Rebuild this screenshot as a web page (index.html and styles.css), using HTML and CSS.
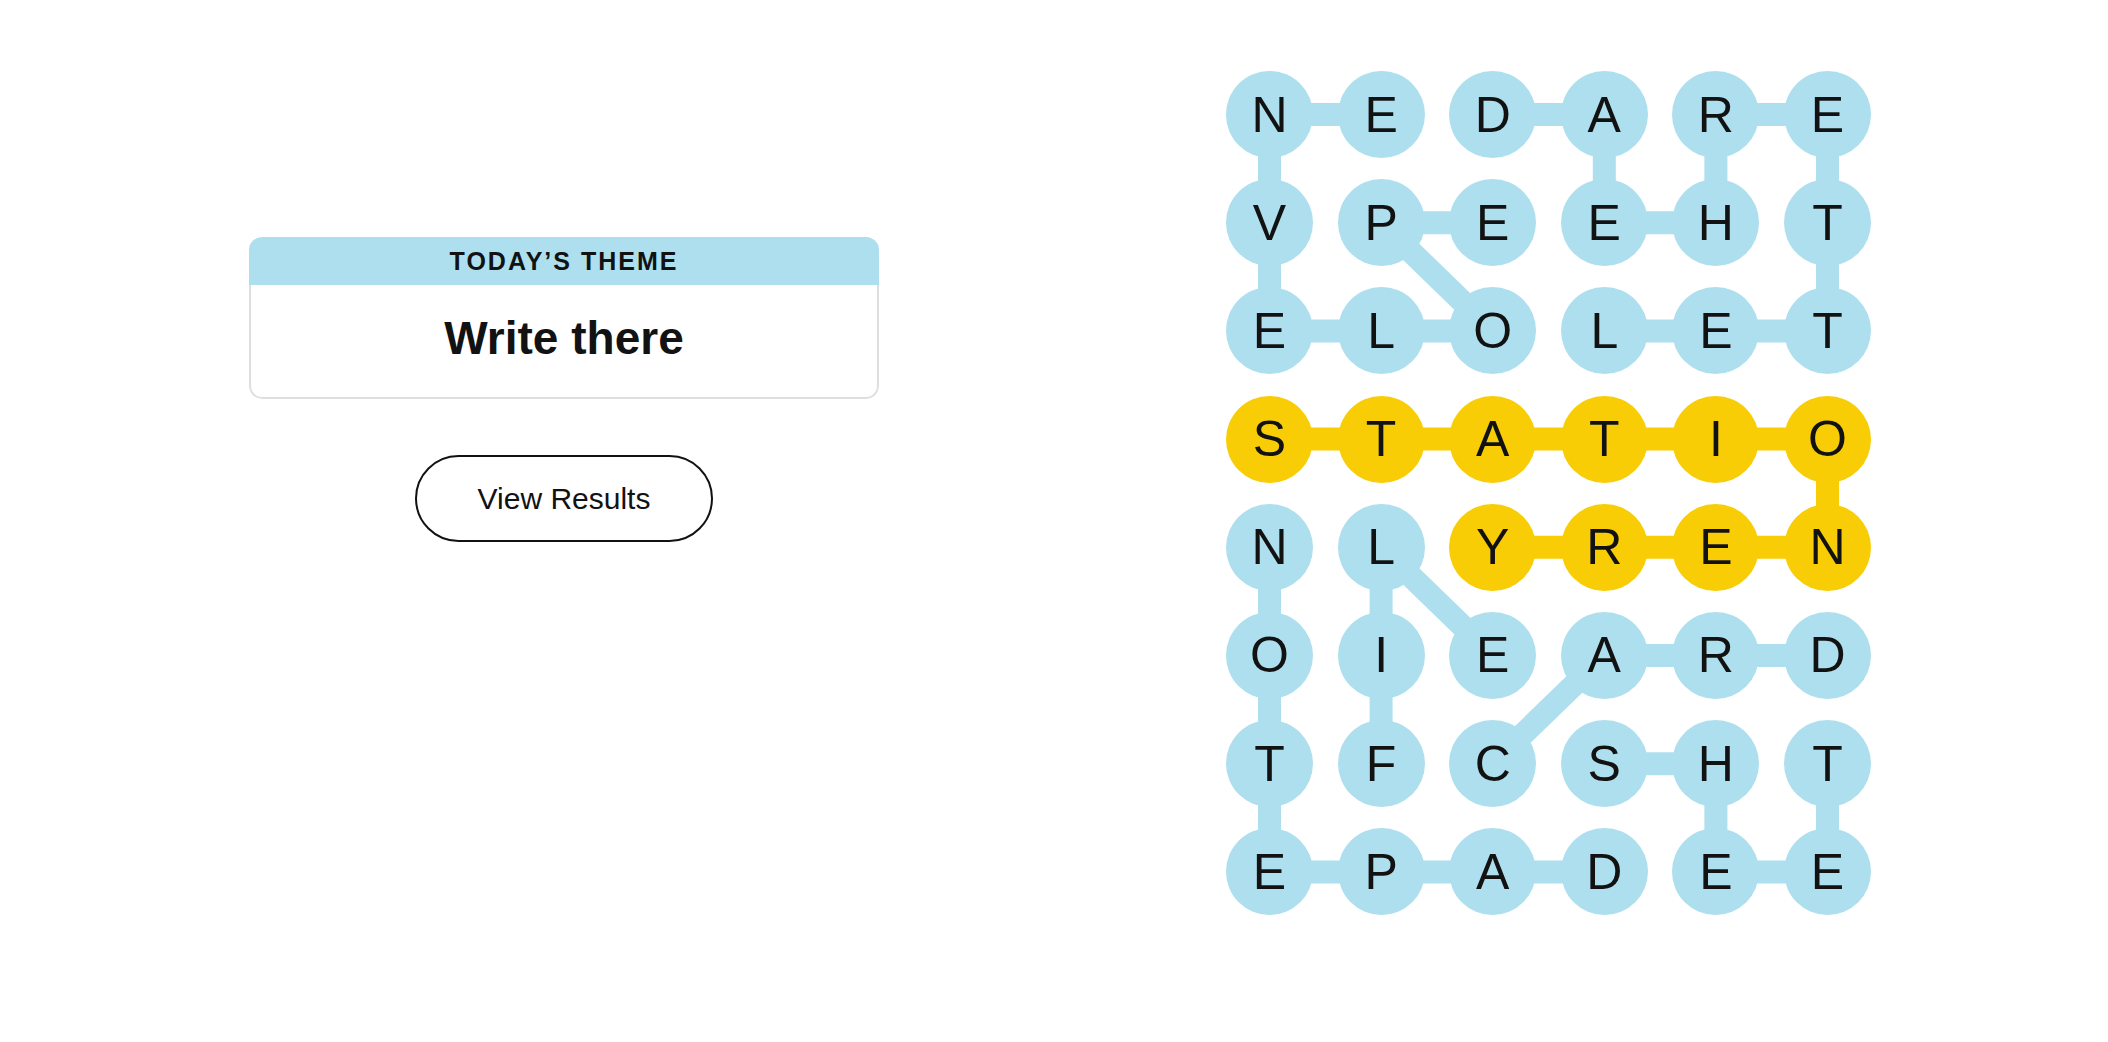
FILE: index.html
```html
<!DOCTYPE html>
<html lang="en">
<head>
    <meta charset="UTF-8">
    <meta name="viewport" content="width=device-width, initial-scale=1.0">
    <title>Strands</title>
    <link rel="stylesheet" href="styles.css">
</head>
<body>
    <main class="game">
        <section class="side">
            <div class="theme-card">
                <div class="theme-head">Today’s Theme</div>
                <div class="theme-body">
                    <h1>Write there</h1>
                </div>
            </div>
            <button class="results-btn">View Results</button>
        </section>

        <section class="board">
            <svg class="connectors" viewBox="0 0 645 844.4" width="645" height="844.4">
                <g class="found">
                    <!-- envelope -->
                    <polyline points="155.1,43.5 43.5,43.5 43.5,151.7 43.5,259.9 155.1,259.9 266.7,259.9 155.1,151.7 266.7,151.7" />
                    <!-- letterhead -->
                    <polyline points="378.3,259.9 489.9,259.9 601.5,259.9 601.5,151.7 601.5,43.5 489.9,43.5 489.9,151.7 378.3,151.7 378.3,43.5 266.7,43.5" />
                    <!-- notepad -->
                    <polyline points="43.5,476.3 43.5,584.5 43.5,692.7 43.5,800.9 155.1,800.9 266.7,800.9 378.3,800.9" />
                    <!-- file -->
                    <polyline points="155.1,692.7 155.1,584.5 155.1,476.3 266.7,584.5" />
                    <!-- card -->
                    <polyline points="266.7,692.7 378.3,584.5 489.9,584.5 601.5,584.5" />
                    <!-- sheet -->
                    <polyline points="378.3,692.7 489.9,692.7 489.9,800.9 601.5,800.9 601.5,692.7" />
                </g>
                <g class="spangram">
                    <polyline points="43.5,368.1 601.5,368.1 601.5,476.3 266.7,476.3" />
                </g>
            </svg>

            <div class="grid">
                <button class="cell found">N</button>
                <button class="cell found">E</button>
                <button class="cell found">D</button>
                <button class="cell found">A</button>
                <button class="cell found">R</button>
                <button class="cell found">E</button>

                <button class="cell found">V</button>
                <button class="cell found">P</button>
                <button class="cell found">E</button>
                <button class="cell found">E</button>
                <button class="cell found">H</button>
                <button class="cell found">T</button>

                <button class="cell found">E</button>
                <button class="cell found">L</button>
                <button class="cell found">O</button>
                <button class="cell found">L</button>
                <button class="cell found">E</button>
                <button class="cell found">T</button>

                <button class="cell spangram">S</button>
                <button class="cell spangram">T</button>
                <button class="cell spangram">A</button>
                <button class="cell spangram">T</button>
                <button class="cell spangram">I</button>
                <button class="cell spangram">O</button>

                <button class="cell found">N</button>
                <button class="cell found">L</button>
                <button class="cell spangram">Y</button>
                <button class="cell spangram">R</button>
                <button class="cell spangram">E</button>
                <button class="cell spangram">N</button>

                <button class="cell found">O</button>
                <button class="cell found">I</button>
                <button class="cell found">E</button>
                <button class="cell found">A</button>
                <button class="cell found">R</button>
                <button class="cell found">D</button>

                <button class="cell found">T</button>
                <button class="cell found">F</button>
                <button class="cell found">C</button>
                <button class="cell found">S</button>
                <button class="cell found">H</button>
                <button class="cell found">T</button>

                <button class="cell found">E</button>
                <button class="cell found">P</button>
                <button class="cell found">A</button>
                <button class="cell found">D</button>
                <button class="cell found">E</button>
                <button class="cell found">E</button>
            </div>
        </section>
    </main>
</body>
</html>
```

FILE: styles.css
```css
body, html {
    margin: 0;
    padding: 0;
    background: white;
    color: #121212;
    font-family: 'Liberation Sans', Arial, sans-serif;
}

.game {
    display: flex;
    align-items: flex-start;
    gap: 347px;
    padding-left: 249px;
}

/* Colonne de gauche : thème + bouton */
.side {
    width: 630px;
    margin-top: 237px;
    display: flex;
    flex-direction: column;
    align-items: center;
}

.theme-card {
    width: 100%;
    border-radius: 13px;
    overflow: hidden;
}

.theme-head {
    height: 48px;
    background: #aedfee;
    display: flex;
    align-items: center;
    justify-content: center;
    text-transform: uppercase;
    font-size: 25px;
    font-weight: 700;
    letter-spacing: 2px;
}

.theme-body {
    height: 112px;
    border: 2px solid #dedede;
    border-top: none;
    border-radius: 0 0 13px 13px;
    display: flex;
    align-items: center;
    justify-content: center;
}

.theme-body h1 {
    margin: 0 0 6px;
    font-size: 46px;
    font-weight: 700;
}

.results-btn {
    margin-top: 56px;
    width: 298px;
    height: 87px;
    border: 2px solid #121212;
    border-radius: 44px;
    background: white;
    color: #121212;
    font-family: inherit;
    font-size: 30px;
    cursor: pointer;
}

/* Plateau */
.board {
    position: relative;
    margin-top: 71px;
    width: 645px;
    height: 844.4px;
}

.connectors {
    position: absolute;
    top: 0;
    left: 0;
    z-index: 0;
}

.connectors polyline {
    fill: none;
    stroke-width: 23;
    stroke-linejoin: round;
}

.connectors .found polyline {
    stroke: #aedfee;
}

.connectors .spangram polyline {
    stroke: #f8cd05;
}

.grid {
    position: relative;
    z-index: 1;
    display: grid;
    grid-template-columns: repeat(6, 87px);
    grid-auto-rows: 87px;
    column-gap: 24.6px;
    row-gap: 21.2px;
}

.cell {
    width: 87px;
    height: 87px;
    border: none;
    border-radius: 50%;
    padding: 0;
    display: flex;
    align-items: center;
    justify-content: center;
    font-family: inherit;
    font-size: 50px;
    color: #121212;
    cursor: pointer;
}

.cell.found {
    background: #aedfee;
}

.cell.spangram {
    background: #f8cd05;
}
```
